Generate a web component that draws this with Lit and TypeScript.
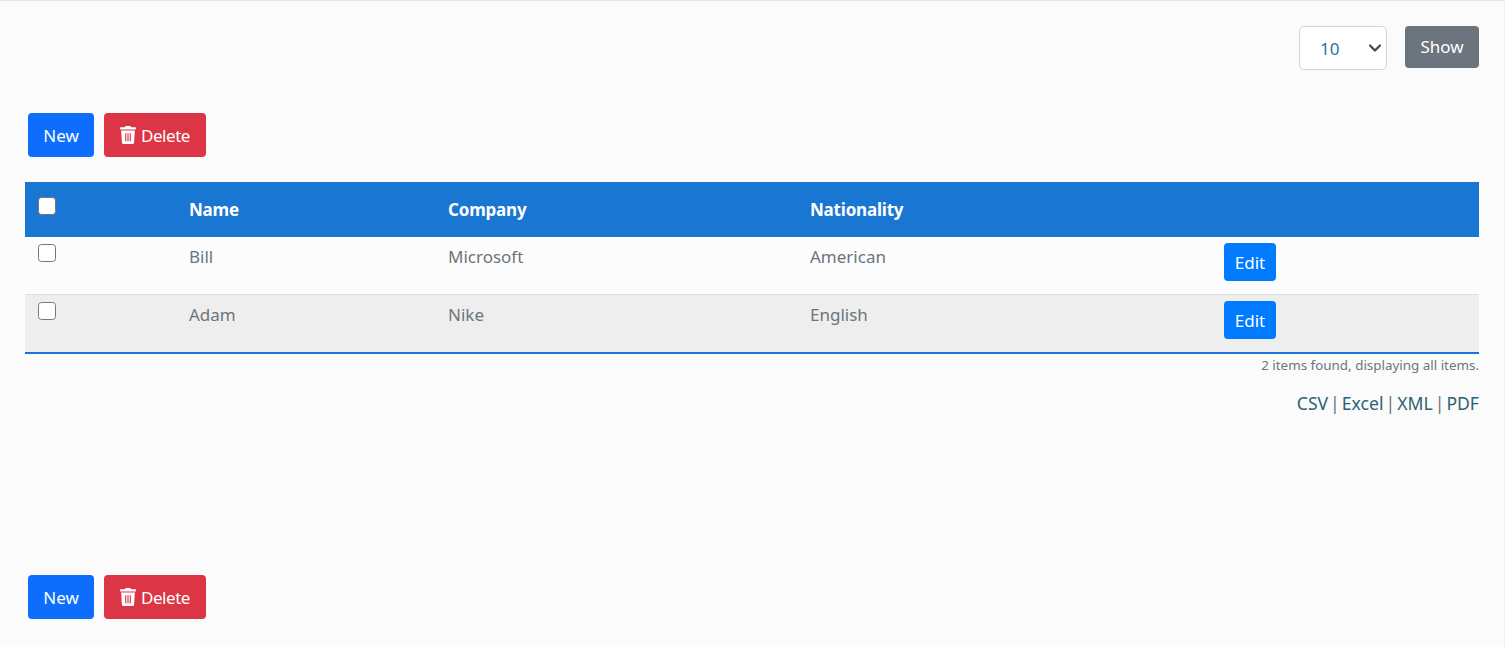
import { LitElement, html, css } from "lit";
import { customElement } from "lit/decorators.js";

const trash = html`<svg class="trash" viewBox="0 0 448 512" width="16" height="18" preserveAspectRatio="none" aria-hidden="true"><path fill="currentColor" d="M432 32H312l-9.4-18.7A24 24 0 0 0 281.1 0H166.800a23.700 23.700 0 0 0-21.400 13.300L136 32H16A16 16 0 0 0 0 48v32a16 16 0 0 0 16 16h416a16 16 0 0 0 16-16V48a16 16 0 0 0-16-16zM53.200 467a48 48 0 0 0 47.900 45h245.800a48 48 0 0 0 47.900-45L416 128H32zM144 208h32v224h-32zm64 0h32v224h-32zm64 0h32v224h-32z"/></svg>`;

@customElement("app-root")
export class AppRoot extends LitElement {
  static styles = css`
    :host {
      display: block;
      box-sizing: border-box;
      height: 647px;
      background: #fbfbfb;
      border-top: 1px solid #e6e6e6;
      border-right: 1px solid #f0f0f0;
      font-family: "Noto Sans", "Open Sans", sans-serif;
      font-size: 17px;
      color: #6c757d;
      overflow: hidden;
    }
    * { box-sizing: border-box; }
    .page { padding: 25px 25px 0 25px; }
    .top { display: flex; justify-content: flex-end; align-items: flex-start; gap: 18px; height: 87px; }
    .select {
      width: 88px; height: 44px; background: #fff; border: 1px solid #ced4da; border-radius: 5px;
      display: flex; align-items: center; justify-content: space-between; padding: 0 5px 0 20px; color: #2c6f9f;
    }
    .select svg { display: block; }
    .btn {
      display: inline-flex; align-items: center; justify-content: center; border: 0; border-radius: 4px;
      color: #fff; font: inherit; padding: 0;
    }
    .show { width: 74px; height: 42px; background: #6c757d; padding-bottom: 2px; }
    .actions { display: flex; gap: 10px; padding-left: 3px; height: 69px; }
    .new { width: 66px; height: 44px; background: #0d6efd; }
    .del { width: 102px; height: 44px; background: #dc3545; gap: 5px; letter-spacing: -0.45px; }
    .trash { display: block; }
    table { width: 1454px; border-collapse: separate; border-spacing: 0; table-layout: fixed; border-bottom: 2px solid #1976d2; }
    th { background: #1976d2; color: #fff; font-weight: 700; text-align: left; height: 55px; padding: 0; vertical-align: middle; letter-spacing: -0.2px; }
    td { padding: 6px 0 0 0; vertical-align: top; line-height: 28px; background: #fcfcfc; }
    tbody tr:first-child td { border-bottom: 1px solid #dee2e6; height: 58px; }
    tbody tr:nth-child(2) td { background: #eeeeee; height: 57px; }
    .box { display: block; width: 18px; height: 18px; margin-left: 13px; border: 1.5px solid #767676; border-radius: 3.5px; background: #fff; }
    th .box { margin-top: -7px; }
    td .box { margin-top: 1px; }
    .edit { width: 52px; height: 38px; background: #007bff; padding-top: 2px; }
    .found { text-align: right; font-size: 13.4px; line-height: 18px; margin-top: 2px; }
    .export { display: flex; justify-content: flex-end; gap: 2px; margin-top: 17px; line-height: 24px; font-size: 17.6px; color: #6c757d; }
    .export a { color: #2f6173; text-decoration: none; }
    .bottom { display: flex; gap: 10px; padding-left: 3px; margin-top: 160px; }
  `;

  private actions() {
    return html`<button class="btn new">New</button><button class="btn del">${trash}Delete</button>`;
  }

  render() {
    const rows = [
      ["Bill", "Microsoft", "American"],
      ["Adam", "Nike", "English"],
    ];
    return html`<div class="page">
      <div class="top">
        <div class="select">10
          <svg viewBox="0 0 12 8" width="12" height="8"><path d="M1 1.500 6 6.500l5-5" fill="none" stroke="#3f4750" stroke-width="2.200" stroke-linecap="round" stroke-linejoin="round"/></svg>
        </div>
        <button class="btn show">Show</button>
      </div>
      <div class="actions">${this.actions()}</div>
      <table>
        <colgroup><col style="width:164px" /><col style="width:259px" /><col style="width:362px" /><col style="width:414px" /><col /></colgroup>
        <thead><tr><th><span class="box"></span></th><th>Name</th><th>Company</th><th>Nationality</th><th></th></tr></thead>
        <tbody>
          ${rows.map(
            (r) => html`<tr><td><span class="box"></span></td><td>${r[0]}</td><td>${r[1]}</td><td>${r[2]}</td><td><button class="btn edit">Edit</button></td></tr>`
          )}
        </tbody>
      </table>
      <div class="found">2 items found, displaying all items.</div>
      <div class="export"><a>CSV</a>|<a>Excel</a>|<a>XML</a>|<a>PDF</a></div>
      <div class="bottom">${this.actions()}</div>
    </div>`;
  }
}
